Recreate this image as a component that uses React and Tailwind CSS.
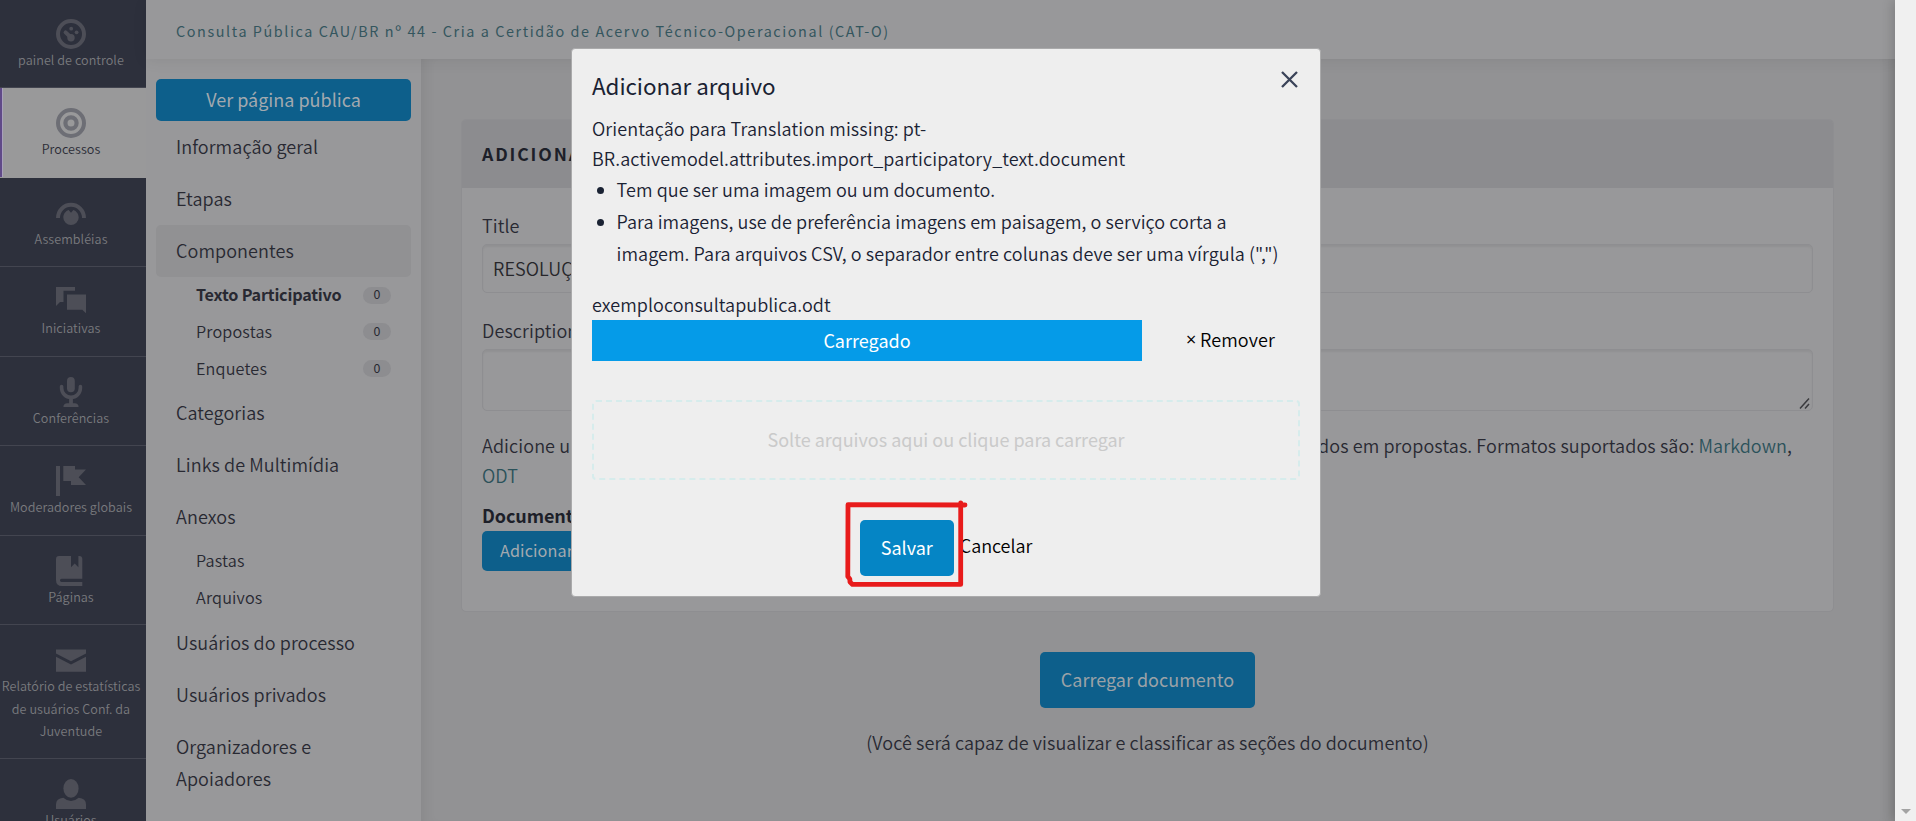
import React from "react";

const navItems = [
  {
    label: "painel de controle",
    icon: (
      <>
        <circle cx="15" cy="15" r="13" fill="none" stroke="currentColor" strokeWidth="4" />
        <circle cx="15.2" cy="9.7" r="1.9" />
        <circle cx="20.6" cy="13.3" r="1.9" />
        <circle cx="15" cy="18.7" r="3.7" />
        <path d="M9.6 13.4L15 18.5" stroke="currentColor" strokeWidth="4" strokeLinecap="round" />
      </>
    ),
  },
  {
    label: "Processos",
    active: true,
    icon: (
      <>
        <circle cx="15" cy="15" r="13" fill="none" stroke="currentColor" strokeWidth="4" />
        <circle cx="15" cy="15" r="5.6" fill="none" stroke="currentColor" strokeWidth="4.2" />
      </>
    ),
  },
  {
    label: "Assembléias",
    icon: (
      <>
        <path d="M2 20A13 13.3 0 0 1 28 20" fill="none" stroke="currentColor" strokeWidth="4" />
        <path d="M12.6 12L15 14.8L17.4 12C20.4 13 22.7 16 22.7 19.4A7.7 7.7 0 0 1 7.3 19.4C7.3 16 9.6 13 12.6 12Z" />
      </>
    ),
  },
  {
    label: "Iniciativas",
    icon: (
      <>
        <path d="M0 0H19V3.7H7.5V15H4L0 19Z" />
        <path d="M11 7.5H30V26.3L26.3 22.7H11Z" />
      </>
    ),
  },
  {
    label: "Conferências",
    icon: (
      <>
        <rect x="11" y="0" width="7.8" height="15.2" rx="3.9" />
        <path d="M5.6 9.6V11A9.4 9.4 0 0 0 24.4 11V9.6" fill="none" stroke="currentColor" strokeWidth="3.6" strokeLinecap="round" />
        <path d="M13.1 21H16.9V26.3H18.7C21 26.3 22.6 27.5 22.6 30H7.4C7.4 27.5 9 26.3 11.3 26.3H13.1Z" />
      </>
    ),
  },
  {
    label: "Moderadores globais",
    icon: (
      <>
        <rect x="0" y="0" width="4" height="30" />
        <path d="M7.3 0H19V3.5H30L22.7 11.2L30 19H15V15H7.3Z" />
      </>
    ),
  },
  {
    label: "Páginas",
    icon: (
      <path d="M3 0H15V11.3L18.7 7.6L22.4 11.3V0H23.3Q26.3 0 26.3 3V22.7H5.6A1.65 1.65 0 0 0 5.6 26H26.3V30H6Q0 30 0 24V3Q0 0 3 0Z" />
    ),
  },
  {
    label: "Relatório de estatísticas de usuários Conf. da Juventude",
    icon: (
      <>
        <path d="M0 4.4H30V8.6L15 16.2L0 8.6Z" />
        <path d="M0 11.8L15 19.6L30 11.8V26.8H0Z" />
      </>
    ),
  },
  {
    label: "Usuários",
    icon: (
      <>
        <ellipse cx="15" cy="9.4" rx="7.6" ry="9.4" />
        <path d="M0 30V25.5Q0 19.6 7.3 18.8Q15 25.4 22.7 18.8Q30 19.6 30 25.5V30Z" />
      </>
    ),
  },
];

function MainNav() {
  return (
    <nav className="w-[146px] shrink-0 overflow-hidden bg-[#2d303c]">
      <div className="-mt-[1.3px]">
        {navItems.map((n) => (
          <div
            key={n.label}
            className={
              "flex flex-col items-center border-b pt-[20.2px] pb-[15.88px] " +
              (n.active
                ? "border-b-[#99999a] bg-[#99999a] text-[#6d6e75] shadow-[inset_2px_0_0_#604a88,inset_3px_0_0_#a9a0bc]"
                : "border-b-[#434550] text-[#4d4e57]")
            }
          >
            <svg width="30" height="30" viewBox="0 0 30 30" fill="currentColor" className="-ml-1 block">
              {n.icon}
            </svg>
            <div
              className={
                "w-[146px] pr-1 text-center text-[12.6px] leading-[22.4px] tracking-[0.05px] " +
                (n.active ? "text-[#2b2c36]" : "text-[#797a7e]")
              }
            >
              {n.label}
            </div>
          </div>
        ))}
      </div>
    </nav>
  );
}

function Item({ children, active }) {
  return (
    <div
      className={
        "rounded-[5px] pt-[9px] pr-5 pb-[11px] pl-5 text-[18px] leading-8 tracking-[0.08px] " +
        (active ? "bg-[#919193]" : "")
      }
    >
      {children}
    </div>
  );
}

function SubItem({ children, count, active }) {
  return (
    <div className="flex h-[36.67px] items-center justify-between pr-5 pl-10">
      <span
        className={
          "pb-[2px] text-[16.2px] leading-6 " +
          (active ? "font-semibold tracking-[-0.2px]" : "tracking-[0.16px]")
        }
      >
        {children}
      </span>
      {count !== undefined && (
        <span className="flex h-[17px] w-7 items-center justify-center rounded-full bg-[#8d8d90] pb-[1px] text-[12.4px] leading-[15px] font-normal">
          {count}
        </span>
      )}
    </div>
  );
}

function ProcessMenu() {
  return (
    <aside className="w-[275px] shrink-0 overflow-hidden bg-[#98989a] px-[10px] pt-5 text-[#282932]">
      <div className="flex h-[42px] items-center justify-center rounded-[5px] bg-[#0d5f8b] pb-[2px] text-[18px] leading-8 font-normal text-[#a2a9af]">
        Ver página pública
      </div>
      <Item>Informação geral</Item>
      <Item>Etapas</Item>
      <Item active>Componentes</Item>
      <SubItem active count={0}>Texto Participativo</SubItem>
      <SubItem count={0}>Propostas</SubItem>
      <SubItem count={0}>Enquetes</SubItem>
      <Item>Categorias</Item>
      <Item>Links de Multimídia</Item>
      <Item>Anexos</Item>
      <div className="pb-[0.7px]">
        <SubItem>Pastas</SubItem>
        <SubItem>Arquivos</SubItem>
      </div>
      <Item>Usuários do processo</Item>
      <Item>Usuários privados</Item>
      <Item>Organizadores e Apoiadores</Item>
    </aside>
  );
}

const fieldBox =
  "mt-1 rounded-[5px] border border-[#8e8e91] bg-[#98989a] shadow-[inset_0_2px_2px_rgba(0,0,0,0.05)] ";

function ImportForm() {
  return (
    <main className="min-w-0 flex-1 bg-[#929294] pt-[60px] pr-[61px] pl-10 text-[18px] leading-[30px] tracking-[0.1px] text-[#282932] shadow-[inset_12px_0_14px_-10px_rgba(0,0,0,0.08),inset_-16px_0_14px_-12px_rgba(0,0,0,0.07)]">
      <section className="h-[493px] overflow-hidden rounded-[5px] border border-[#8e8e91] bg-[#98989a]">
        <h2 className="h-[68px] bg-[#8c8c8f] pt-[19px] pl-5 text-[17.6px] leading-[30px] font-semibold tracking-[1.85px] whitespace-nowrap text-[#1d1f29]">
          ADICIONAR DOCUMENTO
        </h2>
        <div className="px-5 pt-[22px]">
          <label className="block">Title</label>
          <div className={fieldBox + "h-[49px] pt-[7px] pl-[10px] leading-8 text-[#26262a]"}>RESOLUÇÃO</div>
          <label className="mt-[22px] block">Description</label>
          <div className={fieldBox + "flex h-[62px] items-end justify-end pr-[2px] pb-[1px]"}>
            <svg width="11" height="11" viewBox="0 0 11 11" fill="none" stroke="#3a3a3e" strokeWidth="1.5">
              <path d="M1 10.5L10 0.5M6 10.5L10 6" />
            </svg>
          </div>
          <p className="mt-[19px]">
            <span className="flex justify-between pr-[21px] whitespace-nowrap">
              <span className="w-[90px] overflow-hidden">Adicione um</span>
              <span>
                serão importados em propostas. Formatos suportados são: <a className="text-[#2b525a]">Markdown</a>,
              </span>
            </span>
            <a className="text-[#2b525a]">ODT</a>
          </p>
          <div className="mt-[10px] font-semibold tracking-[-0.1px] text-[#1d1f29]">Documento</div>
          <button className="mt-[1px] flex h-10 w-[170px] items-center rounded-[5px] bg-[#0d5f8b] pb-[2px] pl-[18px] text-[16.2px] font-normal whitespace-nowrap text-[#a2a9af]">
            Adicionar arquivo
          </button>
        </div>
      </section>
      <div className="flex flex-col items-center">
        <button className="mt-10 flex h-14 w-[215px] items-center justify-center rounded-[5px] bg-[#0d5f8b] pb-[3px] font-normal tracking-normal text-[#9ba2a7]">
          Carregar documento
        </button>
        <p className="mt-[19px] tracking-[0.07px]">
          (Você será capaz de visualizar e classificar as seções do documento)
        </p>
      </div>
    </main>
  );
}

function UploadModal() {
  return (
    <div className="absolute top-12 left-[571px] h-[549px] w-[750px] rounded-[4px] border border-[#aaaaab] bg-[#eeeeee] px-5 pt-[19px] text-[18px] leading-[30px] tracking-[0.1px] text-[#1a2233]">
      <div className="flex justify-between">
        <h3 className="text-[22.4px] leading-[34px] font-normal tracking-[-0.06px]">Adicionar arquivo</h3>
        <svg width="17" height="17" viewBox="0 0 17 17" className="mt-[3px] mr-[2px]" stroke="#3a4358" strokeWidth="2.3">
          <path d="M1 1L16 16M16 1L1 16" />
        </svg>
      </div>
      <p className="mt-[11px]">
        Orientação para Translation missing: pt-
        <br />
        BR.activemodel.attributes.import_participatory_text.document
      </p>
      <ul className="leading-8">
        {[
          ["Tem que ser uma imagem ou um documento."],
          [
            "Para imagens, use de preferência imagens em paisagem, o serviço corta a",
            'imagem. Para arquivos CSV, o separador entre colunas deve ser uma vírgula (",")',
          ],
        ].map((lines) => (
          <li key={lines[0]} className="flex">
            <span className="mt-[14px] mr-[12.5px] ml-[5px] h-[7px] w-[7px] shrink-0 rounded-full bg-[#1a2233]" />
            <span className="tracking-[0.07px] whitespace-nowrap">
              {lines.map((l) => (
                <span key={l} className="block">{l}</span>
              ))}
            </span>
          </li>
        ))}
      </ul>
      <div className="mt-[20px] tracking-[0.05px]">exemploconsultapublica.odt</div>
      <div className="mt-[1px] flex h-[41px]">
        <div className="flex w-[550px] items-center justify-center bg-[#059be8] pb-[2px] font-normal tracking-normal text-white">
          Carregado
        </div>
        <div className="flex items-center pb-[3px] pl-[44px] text-black">
          <span className="w-[14px] font-['Open_Sans'] font-normal">×</span>
          <span>Remover</span>
        </div>
      </div>
      <div className="mt-[39px] flex h-20 items-center justify-center rounded-[4px] border-2 border-dashed border-[#d6ecec] pb-[2px] font-normal tracking-[-0.01px] text-[#cacaca]">
        Solte arquivos aqui ou clique para carregar
      </div>
      <div className="mt-10 flex h-14 items-center justify-center gap-[6px]">
        <button className="flex h-14 w-[94px] items-center justify-center rounded-[5px] bg-[#0585c5] pb-[2px] font-normal tracking-normal text-white">
          Salvar
        </button>
        <span className="pb-[6px] tracking-[-0.05px] text-black">Cancelar</span>
      </div>
      <svg
        className="absolute top-[450px] left-[269px]"
        width="130"
        height="96"
        viewBox="841 499 130 96"
        fill="none"
        stroke="#e81b1b"
        strokeWidth="4.8"
        strokeLinecap="round"
        strokeLinejoin="round"
      >
        <path d="M965 505L848 504.7L847.8 576.5L849.8 579L850 582L852.5 584.4H960.7V502.8" />
      </svg>
    </div>
  );
}

export default function App() {
  return (
    <div className="relative flex h-[821px] w-[1916px] overflow-hidden font-['Noto_Sans_CJK_SC','Open_Sans',sans-serif] font-[350]">
      <MainNav />
      <div className="flex min-w-0 flex-1 flex-col">
        <header className="relative z-10 h-[59px] shrink-0 bg-[#98989a] pt-[17px] pl-[30px] text-[14.4px] leading-[28px] font-normal tracking-[1.58px] text-[#34565e] shadow-[0_2px_14px_rgba(0,0,0,0.07)]">
          Consulta Pública CAU/BR nº 44 - Cria a Certidão de Acervo Técnico-Operacional (CAT-O)
        </header>
        <div className="flex min-h-0 flex-1">
          <ProcessMenu />
          <ImportForm />
        </div>
      </div>
      <div className="relative z-10 flex w-[21px] shrink-0 items-end justify-center bg-[#f0f0f0] pb-[7px] shadow-[-2px_0_12px_rgba(0,0,0,0.18)]">
        <svg width="10" height="5" viewBox="0 0 10 5" fill="#a3a3a3">
          <path d="M0 0H10L5 5Z" />
        </svg>
      </div>
      <div className="absolute inset-0 z-20">
        <UploadModal />
      </div>
    </div>
  );
}
